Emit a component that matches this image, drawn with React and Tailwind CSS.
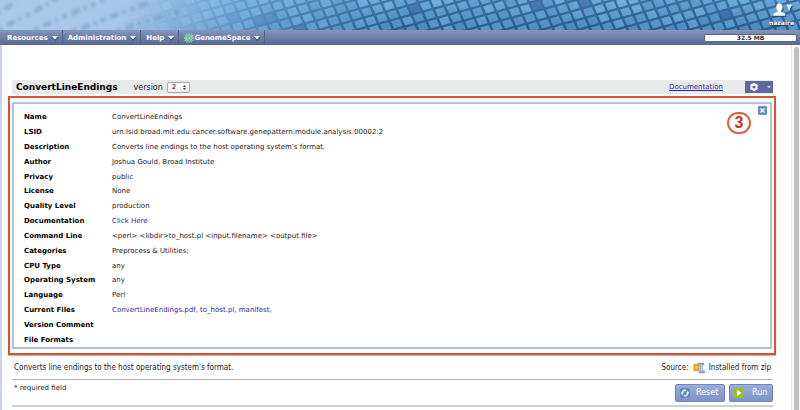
const details = [
  ['Name', 'ConvertLineEndings'],
  ['LSID', 'urn:lsid:broad.mit.edu:cancer.software.genepattern.module.analysis:00002:2'],
  ['Description', "Converts line endings to the host operating system's format."],
  ['Author', 'Joshua Gould, Broad Institute'],
  ['Privacy', 'public'],
  ['License', 'None'],
  ['Quality Level', 'production'],
  ['Documentation', <DocLink key="doc">Click Here</DocLink>],
  ['Command Line', '<perl> <libdir>to_host.pl <input.filename> <output.file>'],
  ['Categories', 'Preprocess & Utilities;'],
  ['CPU Type', 'any'],
  ['Operating System', 'any'],
  ['Language', 'Perl'],
  [
    'Current Files',
    <span key="files">
      <DocLink>ConvertLineEndings.pdf</DocLink>, <DocLink>to_host.pl</DocLink>, <DocLink>manifest</DocLink>,
    </span>,
  ],
  ['Version Comment', ''],
  ['File Formats', ''],
];

const menus = ['Resources', 'Administration', 'Help', 'GenomeSpace'];

function DocLink({ children }) {
  return (
    <a href="#" className="text-[#2f1fa8]">
      {children}
    </a>
  );
}

function Mosaic() {
  const shades = ['#5f9fd2', '#5c9bd0', '#66a8d8', '#5896cc', '#6aaddb', '#62a4d5'];
  const tiles = [];
  let seed = 7;
  for (let r = -4; r < 30; r++) {
    for (let c = 0; c < 76; c++) {
      seed = (seed * 16807) % 2147483647;
      const x = 60 + c * 11 + r * 4;
      const y = c * -3 + r * 9;
      if (x > 100 && x < 810 && y > -14 && y < 34) {
        tiles.push({ x, y, key: `${c}:${r}`, fill: seed % 101 < 8 ? '#3c6cb0' : shades[seed % 6] });
      }
    }
  }
  return (
    <svg className="block h-full w-full" viewBox="0 0 800 30" preserveAspectRatio="none" aria-hidden="true">
      <defs>
        <linearGradient id="fade" x1="0" x2="1" y1="0" y2="0.02">
          <stop offset="0" stopColor="#adcbea" />
          <stop offset="0.16" stopColor="#a6c7e8" />
          <stop offset="0.25" stopColor="#8fbce4" stopOpacity="0.8" />
          <stop offset="0.36" stopColor="#7db4e2" stopOpacity="0.4" />
          <stop offset="0.52" stopColor="#6aa8dc" stopOpacity="0" />
        </linearGradient>
        <linearGradient id="shade" x1="0" x2="0" y1="0" y2="1">
          <stop offset="0" stopColor="#7cc0ee" stopOpacity="0.2" />
          <stop offset="1" stopColor="#1d4a8c" stopOpacity="0.2" />
        </linearGradient>
        <filter id="soft" x="-5%" y="-20%" width="110%" height="140%">
          <feGaussianBlur stdDeviation="0.7" />
        </filter>
        <filter id="haze" x="-5%" y="-50%" width="110%" height="200%">
          <feGaussianBlur stdDeviation="1.8" />
        </filter>
      </defs>
      <rect width="800" height="30" fill="#2b608c" />
      <g filter="url(#soft)">
        {tiles.map(({ x, y, key, fill }) => (
          <path
            key={key}
            d={`M${x + 2} ${y + 1}l7.200 -2l2.500 5.600l-7.200 2z`}
            fill={fill}
            stroke={fill}
            strokeWidth="1.5"
            strokeLinejoin="round"
          />
        ))}
      </g>
      <rect width="800" height="30" fill="url(#shade)" />
      <rect width="800" height="30" fill="url(#fade)" />
      <g filter="url(#haze)" stroke="#6f97c6" strokeOpacity="0.5" strokeWidth="5" strokeDasharray="5 5 9 4 3 5" fill="none">
        <path d="M-4 14L16 2" />
        <path d="M-2 30L30 14L60 -4" />
        <path d="M34 30L66 16L104 0" />
        <path d="M72 32L108 18L150 2" />
        <path d="M116 32L150 20L184 10" />
      </g>
    </svg>
  );
}

function Caret() {
  return (
    <svg className="h-2 w-2" viewBox="0 0 8 8" aria-hidden="true">
      <path d="M1 3h6.500L4.300 7z" fill="#3e4b68" />
      <path d="M1 2h6L4 5.500z" fill="#fff" />
    </svg>
  );
}

function GenomeStar() {
  return (
    <svg className="h-2.5 w-2.5" viewBox="0 0 20 20" aria-hidden="true">
      <g strokeWidth="2.600" strokeLinecap="round">
        <path d="M10 1v6M10 13v6" stroke="#8fd39a" />
        <path d="M2 5l5 3M13 12l5 3" stroke="#7cc6e0" />
        <path d="M18 5l-5 3M7 12l-5 3" stroke="#a6dc84" />
        <path d="M5 2l3 5M12 13l3 5" stroke="#8fd39a" />
        <path d="M15 2l-3 5M8 13l-3 5" stroke="#7cc6e0" />
        <path d="M1 10h5M14 10h5" stroke="#a6dc84" />
      </g>
      <circle cx="10" cy="10" r="3.500" fill="#62b3bd" />
      <circle cx="10" cy="10" r="1.500" fill="#d4efc0" />
    </svg>
  );
}

function GearIcon() {
  return (
    <svg className="h-2.5 w-2.5" viewBox="0 0 20 20" aria-hidden="true">
      <g stroke="#fff" strokeWidth="4.500">
        <path d="M10 2v16M3 6l14 8M3 14l14-8" />
      </g>
      <circle cx="10" cy="10" r="6.800" fill="#fff" />
      <circle cx="10" cy="10" r="3.200" fill="#5f69a0" />
    </svg>
  );
}

function ZipIcon() {
  return (
    <svg className="h-3 w-3" viewBox="0 0 22 22" aria-hidden="true">
      <path d="M9 2h11v3h-3v11h4v4H11v-3h3V5H9z" fill="#8fabe4" stroke="#5f80ca" />
      <path d="M15.500 5v12" stroke="#d8e5fb" strokeWidth="1.500" />
      <rect x="1" y="3" width="11" height="14" rx="2" fill="#e3a72d" />
      <path d="M1 7h11M1 13h11" stroke="#c98a20" strokeWidth="1" />
      <rect x="4" y="7" width="5" height="6" fill="#f3cb62" />
    </svg>
  );
}

function RefreshIcon() {
  return (
    <svg className="h-2.5 w-2.5" viewBox="0 0 20 20" aria-hidden="true">
      <rect x="0.500" y="0.500" width="19" height="19" rx="3" fill="#4f8ac8" />
      <path d="M4.500 10a5.500 5.500 0 0 1 8-4.800M15.500 10a5.500 5.500 0 0 1-8 4.800" stroke="#fff" strokeWidth="2.800" fill="none" />
      <path d="M1.500 9.500h6.500L4.500 14zM18.500 10.500H12L15.500 6z" fill="#fff" />
    </svg>
  );
}

function PlayIcon() {
  return (
    <svg className="h-2.5 w-2.5" viewBox="0 0 20 20" aria-hidden="true">
      <rect width="20" height="20" rx="2" fill="#96bf2c" />
      <path d="M6 4l9 6-9 6z" fill="#fff" />
    </svg>
  );
}

const actionClass =
  'flex h-[18px] items-center rounded-[2px] border border-[#7385bd] bg-linear-to-b from-[#9dacd8] to-[#8093c8] px-1 text-[8px] leading-3 text-white';

export default function App() {
  return (
    <div className="flex min-h-screen flex-col bg-white font-['DejaVu_Sans',Verdana,sans-serif] text-[7px] leading-3 text-[#222]">
      <header className="relative h-[30px]">
        <Mosaic />
        <button
          type="button"
          className="absolute top-[3px] right-[6px] flex flex-col items-end text-[6px] leading-[9px] font-bold text-white [text-shadow:0_1px_1px_#222]"
        >
          <svg className="h-[15px] w-6" viewBox="0 0 24 15" aria-hidden="true">
            <g fill="#173861" opacity="0.7" transform="translate(1 1)">
              <path d="M9.500 1c2.200 0 3 1.600 3 3.500 0 1.800-.7 3-1.300 3.800v1.200l4 1.500v2H3.500v-2l4-1.500V8.300C6.900 7.500 6.300 6.300 6.300 4.500c0-1.900 1-3.500 3.200-3.500z" />
              <path d="M17 2h5l-2.500 5z" />
            </g>
            <path d="M9.500 0.500c2.200 0 3 1.600 3 3.500 0 1.800-.7 3-1.300 3.800V9l4 1.500v2.200H3.500v-2.200l4-1.500V7.800C6.900 7 6.300 5.800 6.300 4c0-1.900 1-3.500 3.200-3.500z" fill="#fff" />
            <path d="M16.500 1.500h5.500l-2.800 6z" fill="#fff" />
          </svg>
          nazaire
        </button>
      </header>

      <nav className="flex h-[15px] items-center justify-between bg-linear-to-b from-[#8496bd] to-[#576990] pr-[3px] pl-0.5">
        <div className="flex h-full">
          {menus.map((name) => (
            <button
              key={name}
              type="button"
              className="flex h-full items-center gap-[3px] border-r border-[#50618a] pr-[3px] pl-[5px] font-bold text-white"
            >
              <span className="flex items-center">
                {name === 'GenomeSpace' && <GenomeStar />}
                {name}
              </span>
              <Caret />
            </button>
          ))}
        </div>
        <div className="h-2 w-[93px] rounded-[2px] border border-[#59647f] bg-white text-center text-[6px] leading-[6px] font-bold text-[#333]">
          32.5 MB
        </div>
      </nav>

      <div className="flex flex-1 border-l-2 border-[#ccd2ee]">
        <main className="min-w-0 flex-1 pt-[35px] pr-[15px] pl-1.5">
          <div className="mr-[3px] ml-1 flex h-[14px] items-center bg-[#e6ebe9] pl-1">
            <h1 className="text-[9px] font-bold text-black">ConvertLineEndings</h1>
            <label htmlFor="version" className="ml-4 pt-0.5 text-[8px]">
              version
            </label>
            <div className="relative ml-1 flex">
              <select
                id="version"
                defaultValue="2"
                className="h-[11px] w-[23px] appearance-none rounded-[2px] border border-[#a9a9a9] bg-linear-to-b from-white to-[#ececec] pl-1 text-[7px] leading-[9px]"
              >
                <option>2</option>
              </select>
              <svg className="pointer-events-none absolute top-[3px] right-1 h-[5px] w-[3px]" viewBox="0 0 6 10" aria-hidden="true">
                <path d="M0 4l3-4 3 4zM0 6l3 4 3-4z" fill="#444" />
              </svg>
            </div>
            <a href="#" className="mr-[22px] ml-auto text-[#2f1fa8] underline">
              Documentation
            </a>
            <button type="button" aria-label="Module options" className="flex h-3 w-7 items-center justify-between bg-[#5f69a0] pr-0.5 pl-1">
              <GearIcon />
              <svg className="h-1 w-1" viewBox="0 0 8 8" aria-hidden="true">
                <path d="M0 2h8L4 6z" fill="#dfe3f5" />
              </svg>
            </button>
          </div>

          <section className="relative mt-[2px] border-2 border-[#d9532f] px-0.5 py-1 shadow-[0_1px_1px_#bbb]">
            <div className="border-2 border-[#b4c0e0] pt-1.5 pl-2.5">
              <table className="h-[237px] w-full border-collapse text-left">
                <tbody>
                  {details.map(([label, value]) => (
                    <tr key={label}>
                      <th scope="row" className="w-[88px] p-0 font-bold text-black">
                        {label}
                      </th>
                      <td className="p-0">{value}</td>
                    </tr>
                  ))}
                </tbody>
              </table>
            </div>
            <button type="button" aria-label="Close" className="absolute top-2 right-[7px]">
              <svg className="block h-[9px] w-[9px]" viewBox="0 0 18 18" aria-hidden="true">
                <rect x="0.500" y="0.500" width="17" height="17" rx="2" fill="#5b8bc9" stroke="#4873b0" />
                <path d="M5 5l8 8M13 5l-8 8" stroke="#fff" strokeWidth="3" />
              </svg>
            </button>
            <div className="absolute top-3.5 right-[23px] flex h-[22px] w-6 items-center justify-center rounded-full border-2 border-[#e0603f] bg-white font-['Liberation_Sans',Arial,sans-serif] text-[16px] font-bold text-[#bd3a25]">
              3
            </div>
          </section>

          <div className="mr-[3px] ml-1">
            <div className="flex h-[25px] items-center justify-between border-b border-[#b5b5b5] px-0.5 pt-0.5 font-['DejaVu_Sans_Condensed','DejaVu_Sans',sans-serif] text-[8px]">
              <p>Converts line endings to the host operating system's format.</p>
              <p className="flex items-center gap-1">
                Source: <ZipIcon /> Installed from zip
              </p>
            </div>
            <div className="flex h-[27px] items-start justify-between border-b-2 border-[#cfcfcf] pl-0.5">
              <p className="pt-0.5">* required field</p>
              <div className="flex gap-1 pt-1">
                <button type="button" className={`${actionClass} w-[50px] gap-1.5`}>
                  <RefreshIcon />
                  Reset
                </button>
                <button type="button" className={`${actionClass} w-11 gap-2`}>
                  <PlayIcon />
                  Run
                </button>
              </div>
            </div>
          </div>
        </main>
        <div className="flex w-[9px] justify-center border-l border-[#e6e6e6] bg-[#fafafa] pt-0.5">
          <div className="w-[5px] rounded-t-full bg-[#c1c1c1]" />
        </div>
      </div>
    </div>
  );
}
